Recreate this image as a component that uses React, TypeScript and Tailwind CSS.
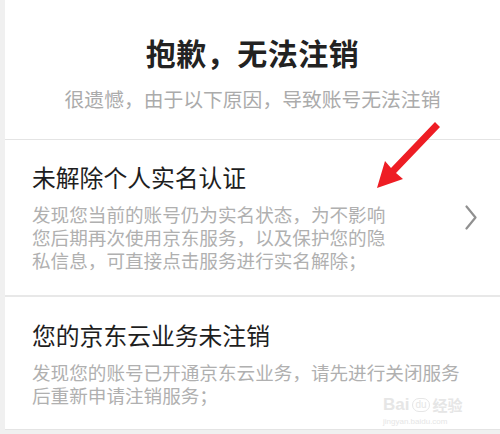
import React from "react";

const cjk = { fontFamily: '"Noto Sans CJK SC", "Noto Sans", sans-serif' };
const lat = { fontFamily: '"Liberation Sans", sans-serif' };

export default function App() {
  return (
    <div className="relative flex w-[500px] h-[434px] bg-[#f0f0f0] overflow-hidden" style={cjk}>
      <div className="w-[5px] shrink-0" />
      <div className="flex flex-1 flex-col">
        <div className="h-[140px] bg-white flex flex-col items-center pt-[34px] border-b border-[#e4e4e4]">
          <div className="text-[30px] leading-[36px] font-bold text-[#222] tracking-[0.5px]">抱歉，无法注销</div>
          <div className="mt-[17px] text-[19.8px] leading-[24px] text-[#ababab]">很遗憾，由于以下原因，导致账号无法注销</div>
        </div>
        <div className="h-[157px] bg-white flex items-center justify-between pl-[27px] pr-[23px] border-b-2 border-[#e8e8e8]">
          <div className="flex flex-col self-start pt-[22px]">
            <div className="text-[23.8px] leading-[30px] text-[#1e1e1e]">未解除个人实名认证</div>
            <div className="mt-[10px] w-[358px] text-[18.6px] leading-[23px] text-[#b0b0b0]">
              发现您当前的账号仍为实名状态，为不影响您后期再次使用京东服务，以及保护您的隐私信息，可直接点击服务进行实名解除；
            </div>
          </div>
          <svg width="12" height="26" viewBox="0 0 12 26" className="mt-[1px]">
            <polyline points="1.5,1.5 10.5,12.5 1.5,23.5" fill="none" stroke="#909090" strokeWidth="2.2" strokeLinecap="round" strokeLinejoin="round" />
          </svg>
        </div>
        <div className="h-[133px] bg-white pl-[27px] pt-[23px] border-b border-[#e4e4e4] flex flex-col items-start">
          <div className="text-[23.8px] leading-[30px] text-[#1e1e1e]">您的京东云业务未注销</div>
          <div className="mt-[9.5px] text-[18.6px] leading-[23px] text-[#b0b0b0] whitespace-pre">
            {"发现您的账号已开通京东云业务，请先进行关闭服务\n后重新申请注销服务；"}
          </div>
        </div>
        <div className="flex-1" />
      </div>

      <svg className="absolute left-0 top-0 pointer-events-none" width="500" height="434">
        <polygon
          points="377,188 385,161 391,168 435,122 440,127 396,173 403,179"
          fill="#ee1d24"
        />
      </svg>

      <div className="absolute left-[383px] top-[396px] flex flex-col items-start pointer-events-none">
        <div className="flex items-center gap-[3px] h-[18px]">
          <span className="text-[17px] leading-[18px] font-bold text-[#e6e6e6]" style={lat}>Bai</span>
          <span className="rounded-full border border-[#e6e6e6] px-[2px] text-[10px] leading-[12px] text-[#e6e6e6]" style={lat}>du</span>
          <span className="text-[15px] leading-[18px] font-bold text-[#e6e6e6]">经验</span>
        </div>
        <div className="mt-[3px] text-[8px] leading-[9px] text-[#e6e6e6]" style={lat}>jingyan.baidu.com</div>
      </div>
    </div>
  );
}
